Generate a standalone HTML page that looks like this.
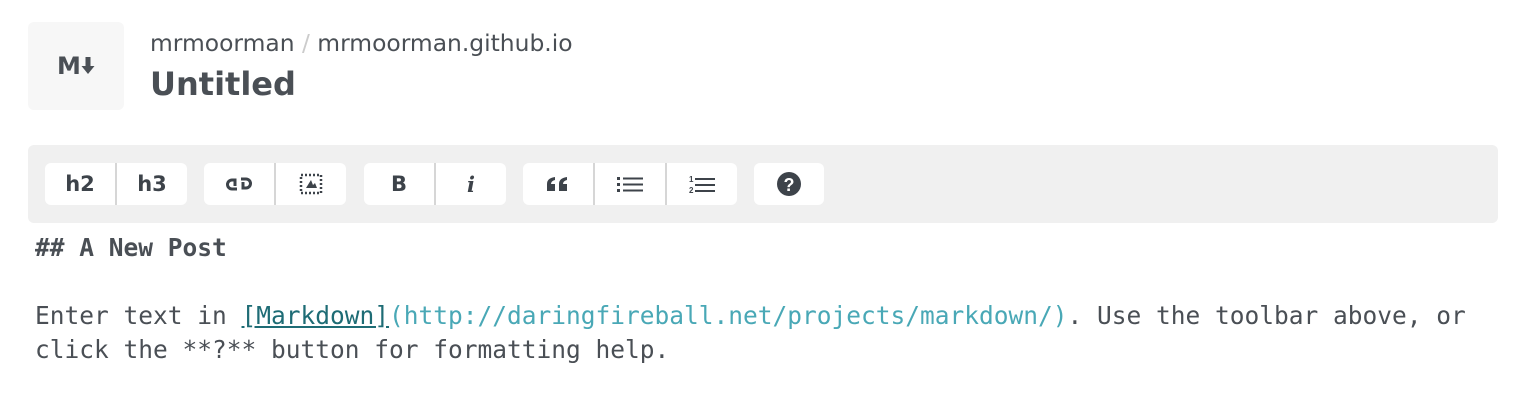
<!DOCTYPE html>
<html><head><style>
body{margin:0;background:#fff;width:1530px;height:404px;overflow:hidden;font-family:"DejaVu Sans",sans-serif;color:#4a4f55;position:relative}
.logo{position:absolute;left:28px;top:22px;width:96px;height:88px;background:#f7f7f7;border-radius:6px;display:flex;align-items:center;justify-content:center;font-weight:bold;font-size:24px;color:#4a4f55}
.sub{position:absolute;left:150px;top:29px;font-size:23.4px;color:#4a4f55}
.sub span{color:#ccc}
.title{position:absolute;left:150px;top:65px;font-size:32px;font-weight:bold;color:#4a4f55}
.bar{position:absolute;left:28px;top:145px;width:1470px;height:78px;background:#f0f0f0;border-radius:6px}
.g{position:absolute;top:18px;height:42px;background:#fff;border-radius:6px;display:flex}
.b{width:70px;height:42px;display:flex;align-items:center;justify-content:center;font-weight:bold;font-size:21px;color:#3d434a}
.b+.b{border-left:2px solid #d6d6d6}
pre{position:absolute;left:35px;top:231px;margin:0;font-family:"DejaVu Sans Mono","Liberation Mono",monospace;font-size:24.5px;line-height:34px;color:#4a4f55}
.u{color:#1e6c75;text-decoration:underline}
.l{color:#49a8b6}
</style></head><body>
<div class="logo">M<svg width="14" height="20" viewBox="0 0 14 20"><path d="M4.5 1h5v9h4l-6.5 8-6.5-8h4z" fill="#4a4f55"/></svg></div>
<div class="sub">mrmoorman <span>/</span> mrmoorman.github.io</div>
<div class="title">Untitled</div>
<div class="bar">
<div class="g" style="left:17px"><div class="b">h2</div><div class="b">h3</div></div>
<div class="g" style="left:176px"><div class="b"><svg width="26" height="18" viewBox="0 0 26 18" fill="none" stroke="#3d434a" stroke-width="3"><path d="M11 14H6a4.5 4.5 0 0 1 0-9h3v6M15 4h5a4.5 4.5 0 0 1 0 9h-3V7"/></svg></div><div class="b"><svg width="26" height="24" viewBox="0 0 26 24"><rect x="3" y="3" width="20" height="18" fill="none" stroke="#3d434a" stroke-width="2.5" stroke-dasharray="2 2"/><path d="M8 16l5-8 2 5 2-2 2 5z" fill="#3d434a"/></svg></div></div>
<div class="g" style="left:336px"><div class="b">B</div><div class="b" style="font-style:italic;font-family:'DejaVu Serif',serif">i</div></div>
<div class="g" style="left:495px"><div class="b"><svg width="22" height="14" viewBox="0 0 22 14" fill="#3d434a"><path d="M0 14V7q0-6 8-7v3q-4 1-4 4h4v7zM12 14V7q0-6 8-7v3q-4 1-4 4h4v7z"/></svg></div><div class="b"><svg width="26" height="16" viewBox="0 0 26 16" fill="#3d434a"><rect x="0" y="1" width="3" height="3"/><rect x="0" y="7" width="3" height="3"/><rect x="0" y="13" width="3" height="3"/><rect x="6" y="1.5" width="20" height="2"/><rect x="6" y="7.5" width="20" height="2"/><rect x="6" y="13.5" width="20" height="2"/></svg></div><div class="b"><svg width="26" height="20" viewBox="0 0 26 20" fill="#3d434a"><text x="0" y="8" font-size="8" font-family="Liberation Sans">1</text><text x="0" y="19" font-size="8" font-family="Liberation Sans">2</text><rect x="6" y="4" width="20" height="2"/><rect x="6" y="10" width="20" height="2"/><rect x="6" y="16" width="20" height="2"/></svg></div></div>
<div class="g" style="left:726px"><div class="b"><svg width="24" height="24" viewBox="0 0 24 24"><circle cx="12" cy="12" r="12" fill="#3d434a"/><text x="12" y="19" text-anchor="middle" font-size="18" font-weight="bold" fill="#fff" font-family="Liberation Sans">?</text></svg></div></div>
</div>
<pre><b>## A New Post</b>

Enter text in <span class="u">[Markdown]</span><span class="l">(http://daringfireball.net/projects/markdown/)</span>. Use the toolbar above, or
click the **?** button for formatting help.</pre>
</body></html>
